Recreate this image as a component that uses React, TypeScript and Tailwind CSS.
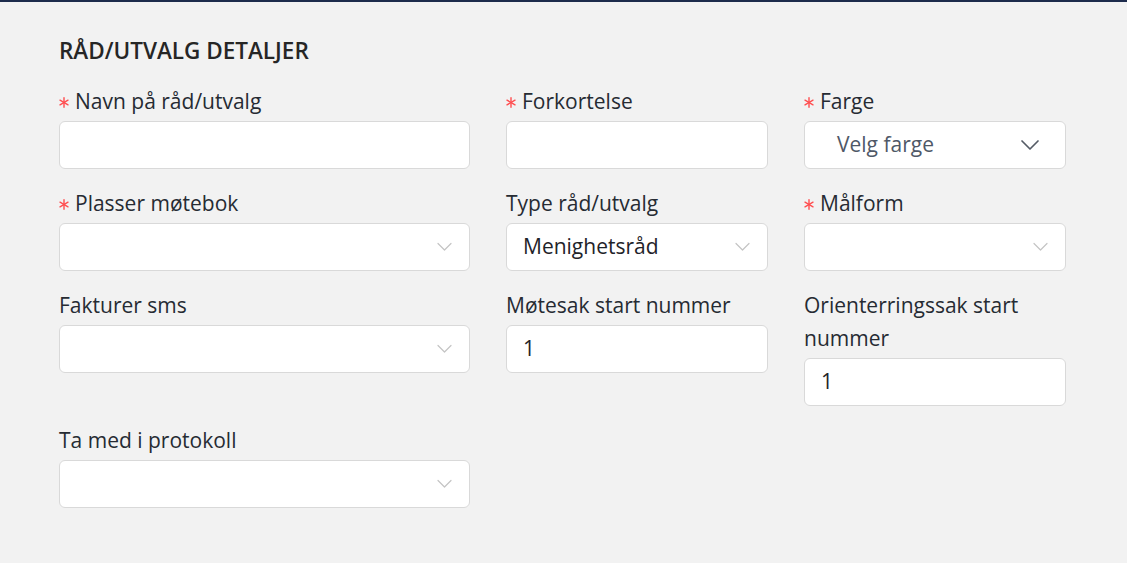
import React from 'react';

const font = { fontFamily: '"Open Sans", "Noto Sans", sans-serif' };

function Chevron({ big }: { big?: boolean }) {
  if (big) {
    return (
      <svg width="20" height="12" viewBox="0 0 20 12" fill="none" className="text-[#555b66]">
        <path d="M2 2 L10 10 L18 2" stroke="currentColor" strokeWidth="1.7" strokeLinecap="round" strokeLinejoin="round" />
      </svg>
    );
  }
  return (
    <svg width="15" height="10" viewBox="0 0 15 10" fill="none" className="text-[#c4c4c4]">
      <path d="M1 1.5 L7.5 8 L14 1.5" stroke="currentColor" strokeWidth="1.2" strokeLinecap="round" strokeLinejoin="round" />
    </svg>
  );
}

function Asterisk() {
  return (
    <svg width="10" height="11" viewBox="0 0 10 11" className="mr-[6px] inline-block align-[1px] text-[#ff4d4f]">
      <g stroke="currentColor" strokeWidth="1.4" strokeLinecap="round">
        <line x1="5" y1="0.8" x2="5" y2="10.2" />
        <line x1="1" y1="3.2" x2="9" y2="7.8" />
        <line x1="1" y1="7.8" x2="9" y2="3.2" />
      </g>
    </svg>
  );
}

function Label({ text, required }: { text: string; required?: boolean }) {
  return (
    <label className="mb-[3px] block text-[21px] leading-[33px] text-[#262b33]">
      {required && <Asterisk />}
      {text}
    </label>
  );
}

function TextInput({ value }: { value?: string }) {
  return (
    <div className="flex h-[48px] items-center rounded-md border border-[#d9d9d9] bg-white px-4 text-[21px] text-[#1f2329]">
      {value}
    </div>
  );
}

function Select({ value, placeholder, big }: { value?: string; placeholder?: string; big?: boolean }) {
  return (
    <div className="flex h-[48px] items-center justify-between rounded-md border border-[#d9d9d9] bg-white pl-4 text-[21px]">
      <span className={placeholder ? 'pl-4 text-[#4f5867]' : 'text-[#1f2329]'}>{value ?? placeholder}</span>
      <span className={big ? 'pr-[25px]' : 'pr-[17px]'}>
        <Chevron big={big} />
      </span>
    </div>
  );
}

export default function App() {
  return (
    <div className="min-h-[563px] border-t-2 border-[#1d2b4c] bg-[#f2f2f2]" style={font}>
      <div className="pl-[59px] pt-[33px]">
        <h2 className="text-[22.5px] font-semibold leading-[32px] text-[#262626]">RÅD/UTVALG DETALJER</h2>

        <div className="mt-[18px] grid grid-cols-[411px_262px_262px] items-start gap-x-[36px] gap-y-[18px]">
          <div>
            <Label text="Navn på råd/utvalg" required />
            <TextInput />
          </div>
          <div>
            <Label text="Forkortelse" required />
            <TextInput />
          </div>
          <div>
            <Label text="Farge" required />
            <Select placeholder="Velg farge" big />
          </div>

          <div>
            <Label text="Plasser møtebok" required />
            <Select />
          </div>
          <div>
            <Label text="Type råd/utvalg" />
            <Select value="Menighetsråd" />
          </div>
          <div>
            <Label text="Målform" required />
            <Select />
          </div>

          <div>
            <Label text="Fakturer sms" />
            <Select />
          </div>
          <div>
            <Label text="Møtesak start nummer" />
            <TextInput value="1" />
          </div>
          <div>
            <Label text="Orienterringssak start nummer" />
            <TextInput value="1" />
          </div>

          <div>
            <Label text="Ta med i protokoll" />
            <Select />
          </div>
        </div>
      </div>
    </div>
  );
}
